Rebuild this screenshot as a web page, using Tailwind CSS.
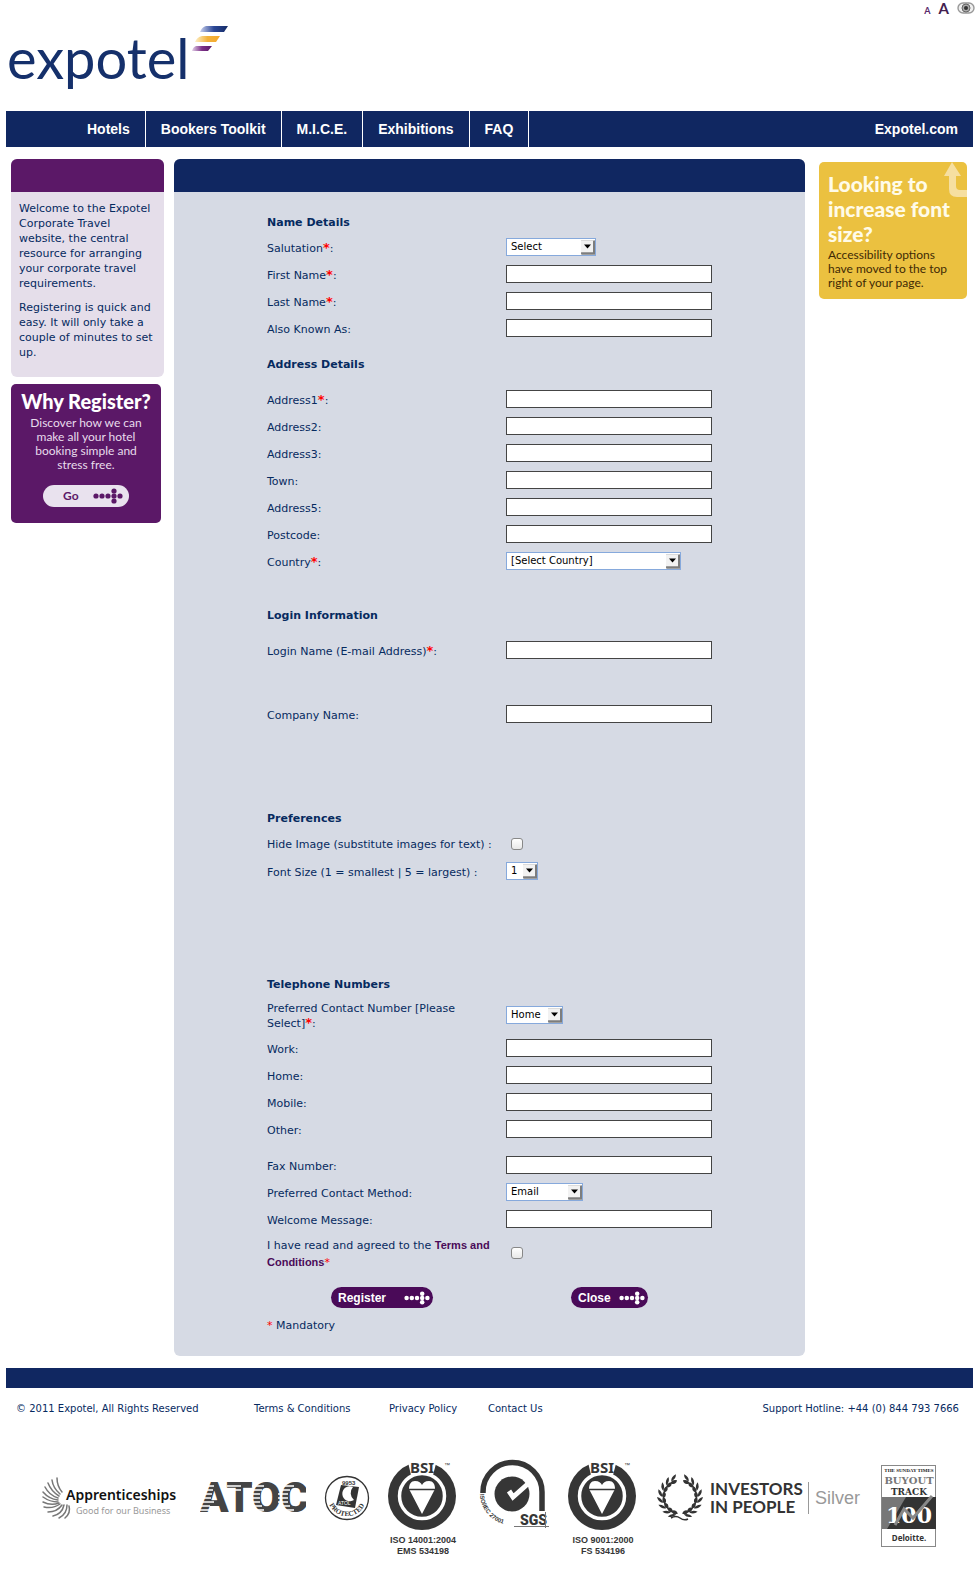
<!DOCTYPE html>
<html lang="en">
<head>
<meta charset="utf-8">
<title>Expotel - Register</title>
<script src="https://cdn.jsdelivr.net/npm/@tailwindcss/browser@4"></script>
</head>
<body class="bg-white font-['Verdana','DejaVu_Sans',sans-serif] text-[11px] leading-[15px] text-[#062a5f]">

<!-- shared symbols -->
<svg class="hidden" aria-hidden="true">
  <symbol id="dots" viewBox="0 0 30 16">
    <circle cx="3" cy="8" r="2.6"/><circle cx="9" cy="8" r="2.6"/><circle cx="15" cy="8" r="2.6"/><circle cx="21" cy="8" r="2.6"/><circle cx="27" cy="8" r="2.6"/><circle cx="21" cy="3" r="2.6"/><circle cx="21" cy="13" r="2.6"/>
  </symbol>
  <symbol id="chev" viewBox="0 0 14 14">
    <path d="M0 0h14v14H0z" fill="#888"/><path d="M0 0h12v12H0z" fill="#f2f2f2"/><path d="M0 12l1 2h13V0l-2 1v11z" fill="#7d7d7d"/><path d="M3 4h7L6.500 8z" fill="#000"/>
  </symbol>
  <symbol id="bsi" viewBox="0 0 74 72">
    <circle cx="34" cy="36" r="34" fill="#363636"/>
    <path d="M19.500 0L23 15h22l4-15z" fill="#fff"/>
    <circle cx="34" cy="36" r="22.500" fill="#363636" stroke="#fff" stroke-width="3.500"/>
    <path d="M21 29c0-5 2-8 6-8 4 0 6 2 7 4 1-2 3-4 7-4 4 0 6 3 6 8L34 54z" fill="#fff"/>
    <path d="M20 29.500h28" stroke="#363636" stroke-width="1.500"/>
  </symbol>
</svg>

<header class="flex items-start justify-between px-[6px]">
  <a href="#" aria-label="Expotel home" class="mt-6 mb-[11px]">
    <svg class="block" width="230" height="76" viewBox="0 0 230 76">
      <defs>
        <linearGradient id="g1"><stop offset="0" stop-color="#c9d0ee"/><stop offset=".5" stop-color="#2b4796"/><stop offset="1" stop-color="#142b66"/></linearGradient>
        <linearGradient id="g2"><stop offset="0" stop-color="#fdf0c8"/><stop offset=".5" stop-color="#f2b23c"/><stop offset="1" stop-color="#f4a92c"/></linearGradient>
        <linearGradient id="g3"><stop offset="0" stop-color="#e2cfe8"/><stop offset=".5" stop-color="#7c3087"/><stop offset="1" stop-color="#5a1a68"/></linearGradient>
      </defs>
      <text x="1" y="55" font-family="Lato, sans-serif" font-size="56" fill="#15306b">expotel</text>
      <path d="M200 2h22l-4 6h-24q2-5 6-6z" fill="url(#g1)"/>
      <path d="M196 12h18l-4 6h-21q2-5 7-6z" fill="url(#g2)"/>
      <path d="M190 22h16l-4 5h-16q1-4 4-5z" fill="url(#g3)"/>
    </svg>
  </a>
  <div class="flex h-4 items-center gap-2 font-['Lato',sans-serif] text-[#5a2a6b]">
    <button type="button" class="pt-1 text-[9px] leading-none font-bold" aria-label="Smaller text">A</button>
    <button type="button" class="text-[15px] leading-none font-bold text-[#43204f]" aria-label="Larger text">A</button>
    <button type="button" aria-label="Display options" class="-mr-[2px]">
      <svg class="block" width="18" height="12" viewBox="0 0 18 12"><rect x="1" y="1" width="16" height="10" rx="5" fill="#eee" stroke="#999" stroke-width="1.400"/><circle cx="9" cy="6" r="4" fill="#aaa" stroke="#666"/><circle cx="9" cy="6" r="2" fill="#333"/></svg>
    </button>
  </div>
</header>

<nav class="mx-[6px] flex h-9 items-stretch bg-[#102761] pl-[66px] font-['Liberation_Sans',Arial,sans-serif] text-sm font-bold text-white">
  <a href="#" class="flex items-center border-r border-white px-[15px]">Hotels</a>
  <a href="#" class="flex items-center border-r border-white px-[15px]">Bookers Toolkit</a>
  <a href="#" class="flex items-center border-r border-white px-[15px]">M.I.C.E.</a>
  <a href="#" class="flex items-center border-r border-white px-[15px]">Exhibitions</a>
  <a href="#" class="flex items-center border-r border-white px-[15px]">FAQ</a>
  <a href="#" class="ml-auto flex items-center px-[15px]">Expotel.com</a>
</nav>

<div class="flex items-start pt-3 pr-3 pl-[11px]">
  <aside class="w-[163px] shrink-0">
    <section class="w-[153px] overflow-hidden rounded-md bg-[#e5deea]">
      <div class="h-[33px] bg-[#5b1867]"></div>
      <div class="flex flex-col gap-[9px] pt-[9px] pr-2 pb-[17px] pl-2">
        <p>Welcome to the Expotel Corporate Travel website, the central resource for arranging your corporate travel requirements.</p>
        <p>Registering is quick and easy. It will only take a couple of minutes to set up.</p>
      </div>
    </section>
    <section class="mt-[7px] flex h-[139px] w-[150px] flex-col items-center rounded-[5px] bg-[#5b1867] font-['Lato',sans-serif] text-[#e8dcec]">
      <h2 class="pt-[6px] text-[20px] leading-[22px] font-black whitespace-nowrap text-white">Why Register?</h2>
      <p class="pt-[4px] text-center text-xs leading-[14px]">Discover how we can<br>make all your hotel<br>booking simple and<br>stress free.</p>
      <button type="button" class="mt-[13px] flex h-[22px] w-[86px] items-center justify-between rounded-full bg-[#e9e2ee] pr-[6px] pl-5 text-xs font-bold text-[#5b1867]">Go
        <svg width="30" height="16" fill="#5b1867"><use href="#dots"/></svg>
      </button>
    </section>
  </aside>

  <main class="min-w-0 flex-1 overflow-hidden rounded-md bg-[#d6dae4]">
    <div class="h-[33px] bg-[#102761]"></div>
    <form class="mx-auto w-[445px] pt-5 pb-[23px]">
      <h3 class="mb-[2px] flex h-5 items-center font-bold">Name Details</h3>
      <div class="grid grid-cols-[239px_206px]">
        <label for="sal" class="pt-[7px]">Salutation<b class="text-[13px] leading-none text-[#f00]">*</b>:</label>
        <div class="h-[27px] pt-1"><div class="relative w-[90px]"><select id="sal" class="block h-[18px] w-full appearance-none border border-[#86a9dc] bg-white pl-1 text-[10px] leading-4 text-black"><option>Select</option></select><svg class="pointer-events-none absolute top-[2px] right-[1px]" width="14" height="15"><use href="#chev"/></svg></div></div>
        <label for="fn" class="pt-[7px]">First Name<b class="text-[13px] leading-none text-[#f00]">*</b>:</label>
        <div class="h-[27px] pt-1"><input id="fn" type="text" class="block h-[18px] w-full border border-[#444] bg-white px-1"></div>
        <label for="ln" class="pt-[7px]">Last Name<b class="text-[13px] leading-none text-[#f00]">*</b>:</label>
        <div class="h-[27px] pt-1"><input id="ln" type="text" class="block h-[18px] w-full border border-[#444] bg-white px-1"></div>
        <label for="aka" class="pt-[7px]">Also Known As:</label>
        <div class="h-[27px] pt-1"><input id="aka" type="text" class="block h-[18px] w-full border border-[#444] bg-white px-1"></div>
      </div>

      <h3 class="flex h-11 items-center font-bold">Address Details</h3>
      <div class="grid grid-cols-[239px_206px]">
        <label for="a1" class="pt-[7px]">Address1<b class="text-[13px] leading-none text-[#f00]">*</b>:</label>
        <div class="h-[27px] pt-1"><input id="a1" type="text" class="block h-[18px] w-full border border-[#444] bg-white px-1"></div>
        <label for="a2" class="pt-[7px]">Address2:</label>
        <div class="h-[27px] pt-1"><input id="a2" type="text" class="block h-[18px] w-full border border-[#444] bg-white px-1"></div>
        <label for="a3" class="pt-[7px]">Address3:</label>
        <div class="h-[27px] pt-1"><input id="a3" type="text" class="block h-[18px] w-full border border-[#444] bg-white px-1"></div>
        <label for="town" class="pt-[7px]">Town:</label>
        <div class="h-[27px] pt-1"><input id="town" type="text" class="block h-[18px] w-full border border-[#444] bg-white px-1"></div>
        <label for="a5" class="pt-[7px]">Address5:</label>
        <div class="h-[27px] pt-1"><input id="a5" type="text" class="block h-[18px] w-full border border-[#444] bg-white px-1"></div>
        <label for="pc" class="pt-[7px]">Postcode:</label>
        <div class="h-[27px] pt-1"><input id="pc" type="text" class="block h-[18px] w-full border border-[#444] bg-white px-1"></div>
        <label for="country" class="pt-[7px]">Country<b class="text-[13px] leading-none text-[#f00]">*</b>:</label>
        <div class="h-[27px] pt-1"><div class="relative w-[175px]"><select id="country" class="block h-[18px] w-full appearance-none border border-[#86a9dc] bg-white pl-1 text-[10px] leading-4 text-black"><option>[Select Country]</option></select><svg class="pointer-events-none absolute top-[2px] right-[1px]" width="14" height="15"><use href="#chev"/></svg></div></div>
      </div>

      <h3 class="mt-[18px] flex h-11 items-center font-bold">Login Information</h3>
      <div class="grid grid-cols-[239px_206px] gap-y-[37px]">
        <label for="login" class="pt-[7px]">Login Name (E-mail Address)<b class="text-[13px] leading-none text-[#f00]">*</b>:</label>
        <div class="h-[27px] pt-1"><input id="login" type="email" class="block h-[18px] w-full border border-[#444] bg-white px-1"></div>
        <label for="co" class="pt-[7px]">Company Name:</label>
        <div class="h-[27px] pt-1"><input id="co" type="text" class="block h-[18px] w-full border border-[#444] bg-white px-1"></div>
      </div>

      <h3 class="mt-[77px] flex h-[26px] items-center font-bold">Preferences</h3>
      <div class="grid grid-cols-[239px_206px]">
        <label for="hide" class="pt-[6px] whitespace-nowrap">Hide Image (substitute images for text) :</label>
        <div class="h-[27px] pt-[7px] pl-[5px]"><input id="hide" type="checkbox" class="block size-3 appearance-none rounded-[3px] border border-[#888] bg-linear-to-b from-white to-[#e8e8e8]"></div>
        <label for="fs" class="pt-[7px] whitespace-nowrap">Font Size (1 = smallest | 5 = largest) :</label>
        <div class="h-[27px] pt-1"><div class="relative w-8"><select id="fs" class="block h-[18px] w-full appearance-none border border-[#86a9dc] bg-white pl-1 text-[10px] leading-4 text-black"><option>1</option><option>2</option><option>3</option><option>4</option><option>5</option></select><svg class="pointer-events-none absolute top-[2px] right-[1px]" width="14" height="15"><use href="#chev"/></svg></div></div>
      </div>

      <h3 class="mt-[83px] flex h-8 items-center font-bold">Telephone Numbers</h3>
      <div class="grid grid-cols-[239px_206px]">
        <label for="pcn" class="h-[35px] pt-px pr-8">Preferred Contact Number [Please Select]<b class="text-[13px] leading-none text-[#f00]">*</b>:</label>
        <div class="pt-[6px]"><div class="relative w-[57px]"><select id="pcn" class="block h-[18px] w-full appearance-none border border-[#86a9dc] bg-white pl-1 text-[10px] leading-4 text-black"><option>Home</option></select><svg class="pointer-events-none absolute top-[2px] right-[1px]" width="14" height="15"><use href="#chev"/></svg></div></div>
        <label for="work" class="pt-[7px]">Work:</label>
        <div class="h-[27px] pt-1"><input id="work" type="tel" class="block h-[18px] w-full border border-[#444] bg-white px-1"></div>
        <label for="home" class="pt-[7px]">Home:</label>
        <div class="h-[27px] pt-1"><input id="home" type="tel" class="block h-[18px] w-full border border-[#444] bg-white px-1"></div>
        <label for="mob" class="pt-[7px]">Mobile:</label>
        <div class="h-[27px] pt-1"><input id="mob" type="tel" class="block h-[18px] w-full border border-[#444] bg-white px-1"></div>
        <label for="oth" class="pt-[7px]">Other:</label>
        <div class="h-[27px] pt-1"><input id="oth" type="tel" class="block h-[18px] w-full border border-[#444] bg-white px-1"></div>
      </div>
      <div class="mt-[9px] grid grid-cols-[239px_206px]">
        <label for="fax" class="pt-[7px]">Fax Number:</label>
        <div class="h-[27px] pt-1"><input id="fax" type="tel" class="block h-[18px] w-full border border-[#444] bg-white px-1"></div>
        <label for="pcm" class="pt-[7px]">Preferred Contact Method:</label>
        <div class="h-[27px] pt-1"><div class="relative w-[77px]"><select id="pcm" class="block h-[18px] w-full appearance-none border border-[#86a9dc] bg-white pl-1 text-[10px] leading-4 text-black"><option>Email</option></select><svg class="pointer-events-none absolute top-[2px] right-[1px]" width="14" height="15"><use href="#chev"/></svg></div></div>
        <label for="wm" class="pt-[7px]">Welcome Message:</label>
        <div class="h-[27px] pt-1"><input id="wm" type="text" class="block h-[18px] w-full border border-[#444] bg-white px-1"></div>
        <label for="tc" class="pt-1 leading-4">I have read and agreed to the <a href="#" class="font-['Liberation_Sans',Arial,sans-serif] font-bold text-[#4a0a58]">Terms and Conditions</a><span class="text-[#f00]">*</span></label>
        <div class="pt-[14px] pl-[5px]"><input id="tc" type="checkbox" class="block size-3 appearance-none rounded-[3px] border border-[#888] bg-linear-to-b from-white to-[#e8e8e8]"></div>
      </div>
      <div class="mt-4 grid grid-cols-[240px_206px] pl-16 font-['Liberation_Sans',Arial,sans-serif] text-xs font-bold text-white">
        <button type="submit" class="flex h-[21px] w-[102px] items-center justify-between rounded-full bg-[#4a0a58] pr-[3px] pl-[7px]">Register<svg width="26" height="14" fill="#fff"><use href="#dots"/></svg></button>
        <button type="button" class="flex h-[21px] w-[77px] items-center justify-between rounded-full bg-[#4a0a58] pr-[3px] pl-[7px]">Close<svg width="26" height="14" fill="#fff"><use href="#dots"/></svg></button>
      </div>
      <p class="mt-[10px]"><span class="text-[#f00]">*</span> Mandatory</p>
    </form>
  </main>

  <aside class="mt-[3px] ml-[14px] w-[148px] shrink-0">
    <section class="relative h-[137px] rounded-[5px] bg-[#ebc140] pl-[9px] font-['Lato',sans-serif]">
      <svg class="absolute top-0 right-0" width="24" height="36" viewBox="0 0 24 36"><path d="M9 0l9 14h-5v10q0 4 4 4h7v7H14q-8 0-8-8V14H1z" fill="#f6dfa0"/></svg>
      <h2 class="relative pt-[9px] text-[21px] leading-[25px] font-black whitespace-nowrap text-[#fffbe8]">Looking to<br>increase font<br>size?</h2>
      <p class="pt-[2px] text-xs leading-[14px] whitespace-nowrap text-[#3f2a05]">Accessibility options<br>have moved to the top<br>right of your page.</p>
    </section>
  </aside>
</div>

<footer class="mx-[6px] mt-3">
  <div class="h-5 bg-[#102761]"></div>
  <div class="flex pt-[13px] pr-[14px] pl-[10px] text-[10px]">
    <span class="w-[238px]">© 2011 Expotel, All Rights Reserved</span>
    <a href="#" class="w-[135px]">Terms &amp; Conditions</a>
    <a href="#" class="w-[99px]">Privacy Policy</a>
    <a href="#">Contact Us</a>
    <span class="ml-auto">Support Hotline: +44 (0) 844 793 7666</span>
  </div>

  <div class="mt-[44px] flex items-start gap-[18px] pl-9">
    <svg class="shrink-0" width="140" height="96" viewBox="0 0 140 96" role="img" aria-label="Apprenticeships">
      <g fill="none" stroke="#777" stroke-width="1.500" stroke-linecap="round">
        <path d="M15 18q0 8 5 14"/><path d="M10 20q1 8 8 14"/><path d="M6 23q3 8 11 13"/><path d="M3 27q4 8 13 11"/><path d="M1 32q6 7 15 8"/><path d="M1 37q7 5 15 5"/><path d="M1 42q8 4 16 1"/><path d="M2 47q9 2 16-3"/><path d="M6 52q9 0 14-7"/><path d="M11 56q9-2 11-11"/><path d="M17 58q8-4 8-13"/><path d="M23 58q6-5 4-12"/>
      </g>
      <text x="24" y="40" font-family="Noto Sans, sans-serif" font-size="14" font-weight="600" fill="#111">Apprenticeships</text>
      <text x="34" y="54" font-family="Noto Sans, sans-serif" font-size="9" fill="#999">Good for our Business</text>
    </svg>

    <svg class="shrink-0" width="106" height="96" viewBox="0 0 106 96" role="img" aria-label="ATOC">
      <text x="0" y="52" font-family="Roboto, sans-serif" font-size="42" font-weight="900" fill="#444">ATOC</text>
      <g stroke="#fff" stroke-width="1.300"><path d="M0 26h14M0 30h13M0 34h12M0 38h11M0 42h14M0 46h10M0 50h9M27 26h14M27 30h14M52 26h12M50 30h12M48 34h12M48 38h12M48 42h12M50 46h12M52 50h12M82 26h12M80 30h10M78 34h10M78 38h10M78 42h10M80 46h10M82 50h12"/></g>
    </svg>

    <svg class="shrink-0 overflow-visible" width="46" height="96" viewBox="0 0 46 96" role="img" aria-label="ATOL protected 9953">
      <defs><path id="prot" d="M4 41a19.500 19.500 0 0 0 38 0"/></defs>
      <circle cx="23" cy="38" r="21.500" fill="#fff" stroke="#333" stroke-width="1.300"/>
      <path d="M17 25l18 2-4 21-19-3z" fill="#333"/>
      <path d="M29 27a7.500 7.500 0 1 0 1 13a9 9 0 0 1-1-13z" fill="#fff"/>
      <text x="18" y="25" font-family="Liberation Sans, sans-serif" font-size="6" font-weight="700" fill="#333">9953</text>
      <text x="14" y="45" font-family="Liberation Sans, sans-serif" font-size="5" fill="#fff">ATOL</text>
      <text font-family="Liberation Serif, serif" font-size="7" font-weight="700" fill="#333"><textPath href="#prot" startOffset="4">PROTECTED</textPath></text>
    </svg>

    <svg class="shrink-0 overflow-visible" width="74" height="96" viewBox="0 0 74 96" role="img" aria-label="BSI ISO 14001:2004 EMS 534198">
      <use href="#bsi" width="74" height="72"/>
      <text x="34" y="13" text-anchor="middle" font-family="Noto Sans, sans-serif" font-size="15" font-weight="700" fill="#363636">BSI</text>
      <text x="56" y="7" font-family="Liberation Sans, sans-serif" font-size="6" fill="#363636">™</text>
      <g font-family="Liberation Sans, sans-serif" font-size="9" font-weight="700" fill="#363636" text-anchor="middle"><text x="35" y="83">ISO 14001:2004</text><text x="35" y="94">EMS 534198</text></g>
    </svg>

    <svg class="shrink-0 overflow-visible" width="70" height="96" viewBox="0 0 70 96" role="img" aria-label="SGS ISO/IEC 27001">
      <defs><path id="iec" d="M0 34A32 32 0 0 0 34 65"/></defs>
      <path d="M3 33v-1a29.500 29.500 0 0 1 59 0v19" fill="none" stroke="#363636" stroke-width="5.500"/>
      <circle cx="32" cy="34" r="17.500" fill="#363636"/>
      <path d="M29 31l4 6 17-15" fill="none" stroke="#fff" stroke-width="5"/>
      <text font-family="Liberation Sans, sans-serif" font-size="6" font-weight="700" fill="#363636"><textPath href="#iec">ISO/IEC 27001</textPath></text>
      <text x="40" y="65" font-family="Roboto, sans-serif" font-size="14" font-weight="900" fill="#363636">SGS</text>
      <path d="M34 66.500h35M65.500 52v16" stroke="#777" stroke-width="1"/>
    </svg>

    <svg class="shrink-0 overflow-visible" width="70" height="96" viewBox="0 0 70 96" role="img" aria-label="BSI ISO 9001:2000 FS 534196">
      <use href="#bsi" width="74" height="72"/>
      <text x="34" y="13" text-anchor="middle" font-family="Noto Sans, sans-serif" font-size="15" font-weight="700" fill="#363636">BSI</text>
      <text x="56" y="7" font-family="Liberation Sans, sans-serif" font-size="6" fill="#363636">™</text>
      <g font-family="Liberation Sans, sans-serif" font-size="9" font-weight="700" fill="#363636" text-anchor="middle"><text x="35" y="83">ISO 9001:2000</text><text x="35" y="94">FS 534196</text></g>
    </svg>

    <svg class="shrink-0" width="207" height="96" viewBox="0 0 207 96" role="img" aria-label="Investors in People Silver">
      <defs>
        <g id="lf"><path d="M0-23q5 1 6 6q-5-1-6-6zM0-17q5-2 7 2q-5 3-7-2z" fill="#333"/></g>
        <g id="half"><use href="#lf" transform="rotate(10)"/><use href="#lf" transform="rotate(30)"/><use href="#lf" transform="rotate(50)"/><use href="#lf" transform="rotate(70)"/><use href="#lf" transform="rotate(90)"/><use href="#lf" transform="rotate(110)"/><use href="#lf" transform="rotate(130)"/><use href="#lf" transform="rotate(148)"/></g>
      </defs>
      <g transform="translate(24 37)"><use href="#half"/><use href="#half" transform="scale(-1 1)"/><path d="M-9 21q5-3 9 0t8 1" fill="none" stroke="#333" stroke-width="1.500"/></g>
      <g font-family="Lato, sans-serif" font-size="17" font-weight="700" fill="#333"><text x="54" y="35">INVESTORS</text><text x="54" y="53">IN PEOPLE</text></g>
      <path d="M152.500 22v32" stroke="#999"/>
      <text x="159" y="44" font-family="Liberation Sans, sans-serif" font-size="18" fill="#999">Silver</text>
    </svg>

    <svg class="shrink-0" width="56" height="96" viewBox="0 0 56 96" role="img" aria-label="Buyout Track 100 Deloitte">
      <rect x=".5" y="5.500" width="54" height="81" fill="#fff" stroke="#888"/>
      <g text-anchor="middle">
        <text x="28" y="12" font-family="Liberation Serif, serif" font-size="5" font-weight="700" fill="#222">THE SUNDAY TIMES</text>
        <text x="28" y="24" font-family="DejaVu Serif, serif" font-size="10" font-weight="700" fill="#777">BUYOUT</text>
        <text x="28" y="35" font-family="DejaVu Serif, serif" font-size="9" font-weight="700" fill="#333">TRACK</text>
        <path d="M1 37h54v32H1z" fill="#333"/><path d="M1 37h24L6 69H1z" fill="#777"/>
        <text x="28" y="63" font-family="DejaVu Serif, serif" font-size="22" font-weight="700" fill="#fff">100</text>
        <path d="M14 65l9-16 9 9 19-22" fill="none" stroke="#888" stroke-width="3"/>
        <text x="28" y="81" font-family="Noto Sans, sans-serif" font-size="8" font-weight="700" fill="#333">Deloitte.</text>
      </g>
    </svg>
  </div>
</footer>
</body>
</html>
